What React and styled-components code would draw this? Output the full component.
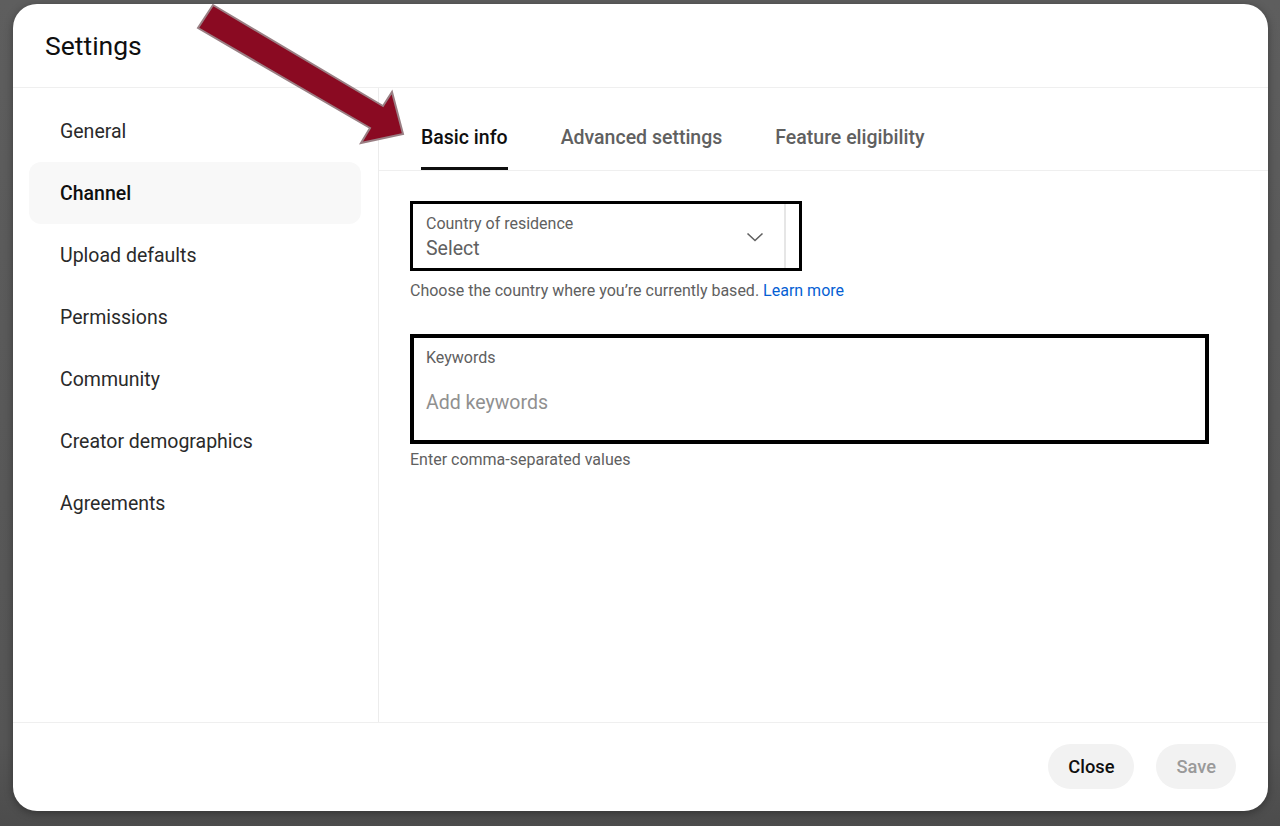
import React from 'react'
import styled, { createGlobalStyle } from 'styled-components'

const GlobalStyle = createGlobalStyle`
  html, body {
    margin: 0;
    padding: 0;
    background: #585858;
    font-family: Roboto, "Liberation Sans", Arial, sans-serif;
  }
  * { box-sizing: border-box; }
`

const Backdrop = styled.div`
  position: relative;
  width: 1280px;
  height: 826px;
  padding: 4px 12px 15px 13px;
  background: linear-gradient(#5e5e5e, #555 90%, #4c4c4c);
  overflow: hidden;
`

const Dialog = styled.div`
  width: 100%;
  height: 100%;
  background: #fff;
  border-radius: 24px;
  display: flex;
  flex-direction: column;
  overflow: hidden;
  box-shadow: 0 2px 8px rgba(0, 0, 0, 0.35);
`

const Header = styled.div`
  height: 84px;
  flex-shrink: 0;
  display: flex;
  align-items: center;
  padding-left: 32px;
  border-bottom: 1px solid #efefef;
`

const Title = styled.h1`
  margin: 0;
  font-size: 26.5px;
  font-weight: 400;
  color: #0f0f0f;
`

const Body = styled.div`
  flex: 1;
  display: flex;
  min-height: 0;
`

const Sidebar = styled.nav`
  width: 366px;
  flex-shrink: 0;
  border-right: 1px solid #ececec;
  padding: 12px 17px 0 16px;
  display: flex;
  flex-direction: column;
`

const NavItem = styled.div`
  height: 62px;
  display: flex;
  align-items: center;
  padding-left: 31px;
  border-radius: 12px;
  font-size: 19.5px;
  color: ${p => (p.$active ? '#0f0f0f' : '#2a2a2a')};
  font-weight: ${p => (p.$active ? 500 : 400)};
  background: ${p => (p.$active ? '#f8f8f8' : 'transparent')};
`

const Main = styled.div`
  flex: 1;
  display: flex;
  flex-direction: column;
`

const TabBar = styled.div`
  height: 83px;
  display: flex;
  gap: 53px;
  padding-left: 42px;
  border-bottom: 1px solid #efefef;
`

const Tab = styled.div`
  display: flex;
  align-items: center;
  padding-top: 19px;
  font-size: 19.5px;
  font-weight: 500;
  color: ${p => (p.$active ? '#0f0f0f' : '#606060')};
  border-bottom: 3px solid ${p => (p.$active ? '#0f0f0f' : 'transparent')};
`

const Form = styled.div`
  padding: 30px 31px;
  display: flex;
  flex-direction: column;
`

const Field = styled.div`
  width: ${p => p.$width}px;
  height: ${p => p.$height}px;
  border: ${p => p.$border}px solid #000;
  display: flex;
  align-items: stretch;
`

const FieldInner = styled.div`
  flex: 1;
  display: flex;
  flex-direction: column;
  padding: ${p => p.$pad};
  border-right: ${p => (p.$divider ? '2px solid #e6e6e6' : 'none')};
  margin-right: ${p => (p.$divider ? '13px' : '0')};
  position: relative;
`

const Label = styled.div`
  font-size: 16px;
  color: #606060;
  line-height: 19px;
`

const Value = styled.div`
  font-size: 19.5px;
  line-height: 24px;
  color: ${p => (p.$placeholder ? '#909090' : '#606060')};
  margin-top: ${p => p.$gap}px;
`

const Chevron = styled.svg`
  position: absolute;
  right: 20px;
  top: 28px;
`

const Helper = styled.div`
  font-size: 16px;
  color: #606060;
  margin-top: ${p => p.$top}px;
  margin-bottom: ${p => p.$bottom}px;
  line-height: 19px;
`

const Link = styled.a`
  color: #065fd4;
  text-decoration: none;
`

const Footer = styled.div`
  height: 89px;
  flex-shrink: 0;
  border-top: 1px solid #efefef;
  display: flex;
  justify-content: flex-end;
  align-items: center;
  gap: 22px;
  padding: 0 32px 2px 0;
`

const Button = styled.button`
  height: 45px;
  padding: 0 20px;
  border: none;
  border-radius: 23px;
  background: #f2f2f2;
  font-family: inherit;
  font-size: 18.3px;
  font-weight: 500;
  color: ${p => (p.$disabled ? '#9a9a9a' : '#0f0f0f')};
`

const Arrow = styled.svg`
  position: absolute;
  left: 0;
  top: 0;
  pointer-events: none;
`

const navItems = [
  'General',
  'Channel',
  'Upload defaults',
  'Permissions',
  'Community',
  'Creator demographics',
  'Agreements',
]

const tabs = ['Basic info', 'Advanced settings', 'Feature eligibility']

const App = () => {
  return (
    <>
      <GlobalStyle />
      <Backdrop>
        <Dialog>
          <Header>
            <Title>Settings</Title>
          </Header>
          <Body>
            <Sidebar>
              {navItems.map(item => (
                <NavItem key={item} $active={item === 'Channel'}>
                  {item}
                </NavItem>
              ))}
            </Sidebar>
            <Main>
              <TabBar>
                {tabs.map(t => (
                  <Tab key={t} $active={t === 'Basic info'}>
                    {t}
                  </Tab>
                ))}
              </TabBar>
              <Form>
                <Field $width={392} $height={70} $border={3}>
                  <FieldInner $pad="10px 13px" $divider>
                    <Label>Country of residence</Label>
                    <Value $gap={4}>Select</Value>
                    <Chevron width="18" height="10" viewBox="0 0 18 10">
                      <path d="M1.5 1.5 L9 8.5 L16.5 1.5" fill="none" stroke="#606060" strokeWidth="1.6" />
                    </Chevron>
                  </FieldInner>
                </Field>
                <Helper $top={10} $bottom={34}>
                  Choose the country where you’re currently based. <Link>Learn more</Link>
                </Helper>
                <Field $width={799} $height={110} $border={4}>
                  <FieldInner $pad="10px 12px">
                    <Label>Keywords</Label>
                    <Value $placeholder $gap={24}>Add keywords</Value>
                  </FieldInner>
                </Field>
                <Helper $top={6} $bottom={0}>Enter comma-separated values</Helper>
              </Form>
            </Main>
          </Body>
          <Footer>
            <Button>Close</Button>
            <Button $disabled>Save</Button>
          </Footer>
        </Dialog>
        <Arrow width="420" height="160" viewBox="0 0 420 160">
          <polygon
            points="213,5 383,106 392,92 403,134 361,143 370,128 198,28"
            fill="#8a0a22"
            stroke="#9a7f84"
            strokeWidth="2"
            strokeLinejoin="miter"
          />
        </Arrow>
      </Backdrop>
    </>
  )
}

export default App
